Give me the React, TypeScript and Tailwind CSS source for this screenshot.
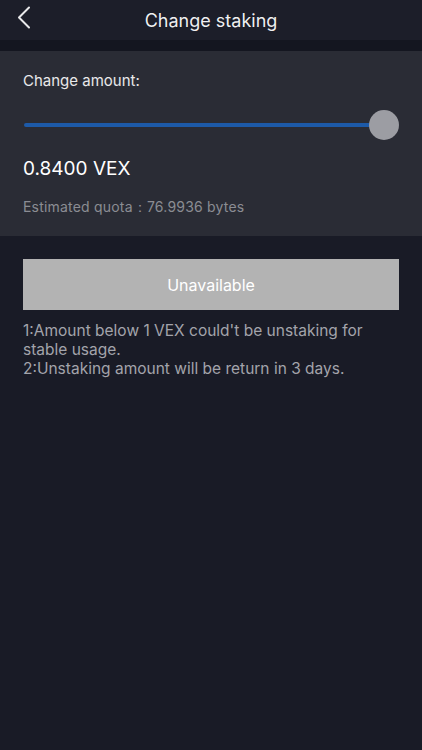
export default function App() {
  return (
    <div
      className="min-h-[750px] w-full bg-[#191b26] text-white"
      style={{ fontFamily: "Inter, 'Noto Sans', sans-serif" }}
    >
      <header className="relative flex h-10 items-center justify-center bg-[#1c1e29]">
        <button type="button" className="absolute left-0 top-0 h-10 w-12 text-white/90" aria-label="Back">
          <svg width="48" height="40" viewBox="0 0 48 40" fill="none">
            <path d="M29 7.5 L19 17.5 L29 27.5" stroke="currentColor" strokeWidth="2" strokeLinecap="round" strokeLinejoin="round" />
          </svg>
        </button>
        <h1 className="text-[18px] font-normal text-white/95">Change staking</h1>
      </header>
      <div className="h-[11px] bg-[#141620]" />

      <section className="bg-[#2a2c35] px-[23px] pb-[19px] pt-[20px]">
        <p className="text-[15px] leading-5 text-white/90">Change amount:</p>
        <div className="relative mt-[19px] flex h-[30px] items-center">
          <div className="ml-px h-[4px] w-[calc(100%-20px)] rounded-full bg-[#1d5aa8]" />
          <div className="absolute right-0 top-0 h-[30px] w-[30px] rounded-full bg-[#9c9da3]" />
        </div>
        <p className="mt-[17px] text-[19px] leading-6 text-white">0.8400 VEX</p>
        <p className="mt-[16px] text-[14px] leading-5 tracking-[0.2px] text-[#8b8c93]">
          Estimated quota：76.9936 bytes
        </p>
      </section>

      <div className="px-[23px] pt-[23px]">
        <button
          type="button"
          className="flex h-[51px] w-full items-center justify-center bg-[#b3b3b3] text-[16px] text-white"
        >
          Unavailable
        </button>
        <div className="mt-[11px] text-[15.5px] leading-[19px] text-[#a3a4ab]">
          <p>1:Amount below 1 VEX could't be unstaking for stable usage.</p>
          <p>2:Unstaking amount will be return in 3 days.</p>
        </div>
      </div>
    </div>
  );
}
